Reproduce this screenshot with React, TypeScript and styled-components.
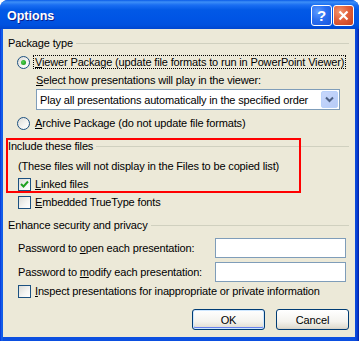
import React from "react";
import styled, { createGlobalStyle } from "styled-components";

const GlobalStyle = createGlobalStyle`
  html, body {
    margin: 0;
    padding: 0;
    background: #ffffff;
  }
  body {
    font-family: "Liberation Sans", Arial, sans-serif;
    font-size: 11px;
    letter-spacing: -0.15px;
    color: #000000;
  }
`;

const Window = styled.div`
  width: 359px;
  height: 341px;
  display: flex;
  flex-direction: column;
  background: linear-gradient(90deg, #0831d9 0px, #166aee 2px, #0b4fe0 3px, #0b4fe0 354px, #0842d6 357px, #001ea0 359px);
  border-radius: 8px 8px 0 0;
  overflow: hidden;
  box-sizing: border-box;
`;

const TitleBar = styled.div`
  height: 29px;
  flex: none;
  display: flex;
  align-items: center;
  padding: 0 5px 0 7px;
  background: linear-gradient(
    180deg,
    #0a5be8 0px,
    #3d8ff7 2px,
    #1a6ef2 5px,
    #0259e6 10px,
    #0055e5 18px,
    #0051df 25px,
    #0046cf 29px
  );
`;

const Title = styled.div`
  flex: 1;
  color: #ffffff;
  font-weight: bold;
  font-size: 12.5px;
  letter-spacing: 0;
  padding-top: 2px;
  text-shadow: 1px 1px 0 #0a1e8a;
`;

const CaptionButton = styled.div<{ $kind: "help" | "close" }>`
  width: 21px;
  height: 21px;
  box-sizing: border-box;
  margin-left: 1px;
  margin-top: 2px;
  border: 1px solid #ffffff;
  border-radius: 3px;
  display: flex;
  align-items: center;
  justify-content: center;
  color: #ffffff;
  font-weight: bold;
  font-size: 15px;
  letter-spacing: 0;
  background: ${(p) =>
    p.$kind === "help"
      ? "radial-gradient(circle at 30% 30%, #5d9bff 0%, #2a6ff0 45%, #1756de 100%)"
      : "radial-gradient(circle at 30% 30%, #f2956f 0%, #e2603b 45%, #c5401f 100%)"};
`;

const Body = styled.div`
  flex: 1;
  margin: 0 4px 4px 3px;
  background: #ece9d8;
  display: flex;
  flex-direction: column;
`;

const GroupHeader = styled.div<{ $top: number }>`
  display: flex;
  align-items: center;
  height: 14px;
  margin: ${(p) => p.$top}px 6px 0 5px;
`;

const GroupLine = styled.div`
  flex: 1;
  height: 0;
  border-top: 1px solid #d0d0bf;
  margin-left: 3px;
`;

const Row = styled.div<{ $top?: number; $indent: number; $height?: number }>`
  display: flex;
  align-items: center;
  height: ${(p) => p.$height ?? 18}px;
  margin-top: ${(p) => p.$top ?? 0}px;
  padding-left: ${(p) => p.$indent}px;
  white-space: nowrap;
`;

const Key = styled.span`
  text-decoration: underline;
`;

const RadioCircle = styled.div<{ $checked?: boolean }>`
  width: 13px;
  height: 13px;
  flex: none;
  box-sizing: border-box;
  border-radius: 50%;
  border: 1px solid #1c5180;
  background: linear-gradient(135deg, #dcdcd7 0%, #f5f5f3 60%, #ffffff 100%);
  display: flex;
  align-items: center;
  justify-content: center;
  &::after {
    content: "";
    display: ${(p) => (p.$checked ? "block" : "none")};
    width: 5px;
    height: 5px;
    border-radius: 50%;
    background: radial-gradient(circle at 40% 40%, #55d355 0%, #21a121 70%);
  }
`;

const CheckBox = styled.div`
  width: 13px;
  height: 13px;
  flex: none;
  box-sizing: border-box;
  border: 1px solid #1c5180;
  background: linear-gradient(135deg, #dcdcd7 0%, #f5f5f3 60%, #ffffff 100%);
  display: flex;
  align-items: center;
  justify-content: center;
`;

const Label = styled.span<{ $gap?: number; $focus?: boolean }>`
  margin-left: ${(p) => p.$gap ?? 3}px;
  padding: 0 1px;
  line-height: 12px;
  border: 1px dotted ${(p) => (p.$focus ? "#000000" : "transparent")};
`;

const SelectBox = styled.div`
  margin: 0 0 0 33px;
  width: 304px;
  height: 21px;
  box-sizing: border-box;
  border: 1px solid #7f9db9;
  background: #ffffff;
  display: flex;
  align-items: center;
  padding: 1px 1px 1px 3px;
`;

const SelectText = styled.div`
  flex: 1;
  white-space: nowrap;
`;

const ArrowButton = styled.div`
  width: 17px;
  height: 17px;
  box-sizing: border-box;
  border: 1px solid #b9d1fa;
  border-radius: 2px;
  background: linear-gradient(135deg, #c7d7fb 0%, #b6cbf7 100%);
  display: flex;
  align-items: center;
  justify-content: center;
`;

const Marked = styled.div`
  position: relative;
  display: flex;
  flex-direction: column;
`;

const RedMark = styled.div`
  position: absolute;
  left: 3px;
  top: 6px;
  width: 295px;
  height: 55px;
  box-sizing: border-box;
  border: 2px solid #ff0000;
  pointer-events: none;
`;

const FieldRow = styled.div<{ $top: number }>`
  display: flex;
  align-items: center;
  height: 20px;
  margin-top: ${(p) => p.$top}px;
  padding: 0 9px 0 15px;
  white-space: nowrap;
`;

const FieldLabel = styled.span`
  flex: 1;
`;

const TextInput = styled.div`
  width: 131px;
  height: 20px;
  box-sizing: border-box;
  border: 1px solid #7f9db9;
  background: #ffffff;
`;

const ButtonRow = styled.div`
  display: flex;
  justify-content: flex-end;
  gap: 11px;
  margin: 9px 6px 0 0;
`;

const Button = styled.div<{ $default?: boolean }>`
  width: 73px;
  height: 21px;
  box-sizing: border-box;
  border: 1px solid #003c74;
  border-radius: 3px;
  display: flex;
  align-items: center;
  justify-content: center;
  background: linear-gradient(180deg, #ffffff 0%, #f4f3ee 60%, #e3e0d5 90%, #d6d0c5 100%);
  box-shadow: ${(p) =>
    p.$default ? "inset 0 0 0 1px #cee7ff, inset 0 -1px 0 1px #6982ee" : "none"};
`;

const Check = () => (
  <svg width="9" height="9" viewBox="0 0 9 9">
    <polyline points="1,4 3.5,6.5 8,1.5" fill="none" stroke="#21a121" strokeWidth="2" />
  </svg>
);

const Chevron = () => (
  <svg width="9" height="7" viewBox="0 0 9 7">
    <polyline points="1,1.5 4.5,5 8,1.5" fill="none" stroke="#4d6185" strokeWidth="2" />
  </svg>
);

const CloseX = () => (
  <svg width="11" height="11" viewBox="0 0 11 11">
    <path d="M1.5 1.5 L9.5 9.5 M9.5 1.5 L1.5 9.5" stroke="#ffffff" strokeWidth="2.2" />
  </svg>
);

const App: React.FC = () => {
  return (
    <>
      <GlobalStyle />
      <Window>
        <TitleBar>
          <Title>Options</Title>
          <CaptionButton $kind="help">?</CaptionButton>
          <CaptionButton $kind="close">
            <CloseX />
          </CaptionButton>
        </TitleBar>
        <Body>
          <GroupHeader $top={7}>
            Package type
            <GroupLine />
          </GroupHeader>
          <Row $top={3} $indent={14}>
            <RadioCircle $checked />
            <Label $focus>
              <Key>V</Key>iewer Package (update file formats to run in PowerPoint Viewer)
            </Label>
          </Row>
          <Row $indent={33}>
            <Key>S</Key>elect how presentations will play in the viewer:
          </Row>
          <SelectBox>
            <SelectText>Play all presentations automatically in the specified order</SelectText>
            <ArrowButton>
              <Chevron />
            </ArrowButton>
          </SelectBox>
          <Row $top={4} $indent={14}>
            <RadioCircle />
            <Label>
              <Key>A</Key>rchive Package (do not update file formats)
            </Label>
          </Row>

          <Marked>
            <GroupHeader $top={7}>
              Include these files
              <GroupLine />
            </GroupHeader>
            <Row $top={4} $indent={15}>
              (These files will not display in the Files to be copied list)
            </Row>
            <Row $indent={15}>
              <CheckBox>
                <Check />
              </CheckBox>
              <Label $gap={2}>
                <Key>L</Key>inked files
              </Label>
            </Row>
            <RedMark />
          </Marked>
          <Row $indent={15}>
            <CheckBox />
            <Label $gap={2}>
              <Key>E</Key>mbedded TrueType fonts
            </Label>
          </Row>

          <GroupHeader $top={7}>
            Enhance security and privacy
            <GroupLine />
          </GroupHeader>
          <FieldRow $top={6}>
            <FieldLabel>
              Password to <Key>o</Key>pen each presentation:
            </FieldLabel>
            <TextInput />
          </FieldRow>
          <FieldRow $top={4}>
            <FieldLabel>
              Password to <Key>m</Key>odify each presentation:
            </FieldLabel>
            <TextInput />
          </FieldRow>
          <Row $indent={15}>
            <CheckBox />
            <Label $gap={2}>
              <Key>I</Key>nspect presentations for inappropriate or private information
            </Label>
          </Row>
          <ButtonRow>
            <Button $default>OK</Button>
            <Button>Cancel</Button>
          </ButtonRow>
        </Body>
      </Window>
    </>
  );
};

export default App;
